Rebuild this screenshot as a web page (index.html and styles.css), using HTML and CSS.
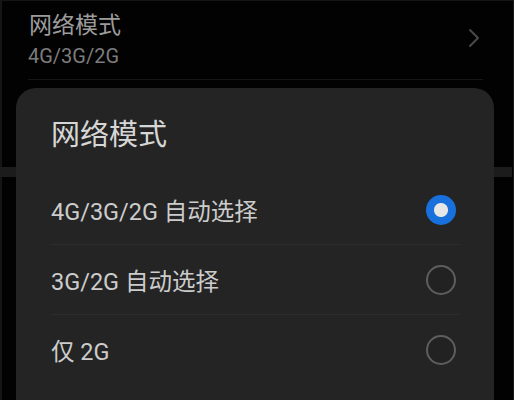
FILE: index.html
```html
<!DOCTYPE html>
<html lang="zh-CN">
<head>
<meta charset="utf-8">
<title>网络模式</title>
<link rel="stylesheet" href="styles.css">
</head>
<body>
<div class="screen">
  <div class="list">
    <div class="item">
      <div class="item-text">
        <div class="item-title">网络模式</div>
        <div class="item-sub">4G/3G/2G</div>
      </div>
      <svg class="chevron" width="12" height="20" viewBox="0 0 12 20"><path d="M2 2 L10 10 L2 18" fill="none" stroke="#4a4a4a" stroke-width="2" stroke-linecap="round" stroke-linejoin="round"/></svg>
    </div>
    <div class="item-gap"></div>
    <div class="band"></div>
  </div>

  <div class="dialog">
    <div class="dialog-title">网络模式</div>
    <div class="option">
      <span class="option-label">4G/3G/2G 自动选择</span>
      <span class="radio radio-on"></span>
    </div>
    <div class="option">
      <span class="option-label">3G/2G 自动选择</span>
      <span class="radio"></span>
    </div>
    <div class="option">
      <span class="option-label">仅 2G</span>
      <span class="radio"></span>
    </div>
  </div>
</div>
</body>
</html>
```

FILE: styles.css
```css
html, body {
  margin: 0;
  padding: 0;
  background: #000;
}

.screen {
  position: relative;
  width: 514px;
  height: 400px;
  overflow: hidden;
  background: #020202;
  font-family: "Noto Sans CJK SC", "Noto Sans", sans-serif;
  box-shadow: inset 2px 1px 0 #151515, inset -1px 0 0 #1a1a1a;
}

.list {
  display: flex;
  flex-direction: column;
}

.item {
  display: flex;
  align-items: flex-start;
  justify-content: space-between;
  height: 80px;
  margin: 0 31px 0 28px;
  border-bottom: 1px solid #161616;
  box-sizing: border-box;
}

.item-text {
  display: flex;
  flex-direction: column;
  padding-top: 7px;
}

.item-title {
  font-size: 23px;
  line-height: 32px;
  color: #9c9c9c;
  margin-left: 1px;
}

.item-sub {
  font-family: "Roboto", "Noto Sans", sans-serif;
  font-size: 20px;
  line-height: 24px;
  margin-top: 5px;
  color: #7c7c7c;
}

.chevron {
  margin-right: 3px;
  margin-top: 28px;
}

.item-gap {
  height: 87px;
}

.band {
  height: 10px;
  background: #1c1c1c;
  margin-right: 2px;
}

.dialog {
  position: absolute;
  left: 16px;
  top: 88px;
  width: 478px;
  height: 340px;
  background: #242424;
  border-radius: 20px;
  padding: 0 34px 0 34px;
  box-sizing: border-box;
}

.dialog-title {
  height: 87px;
  padding-top: 24px;
  box-sizing: border-box;
  font-size: 29px;
  line-height: 40px;
  color: #d6d6d6;
  padding-left: 1px;
}

.option {
  display: flex;
  align-items: center;
  justify-content: space-between;
  height: 70px;
  border-bottom: 1px solid #2c2c2c;
  box-sizing: border-box;
  padding: 0 4px 0 1px;
}

.option:last-child {
  border-bottom: none;
}

.option-label {
  font-family: "Roboto", "Noto Sans CJK SC", sans-serif;
  font-size: 23.5px;
  color: #cccccc;
}

.radio {
  width: 30px;
  height: 30px;
  border-radius: 50%;
  border: 2px solid #5e5e5e;
  box-sizing: border-box;
  background: #222;
}

.radio-on {
  border: none;
  background: radial-gradient(circle, #e6e6e6 0 6.5px, #1870dc 7.5px);
}
```
